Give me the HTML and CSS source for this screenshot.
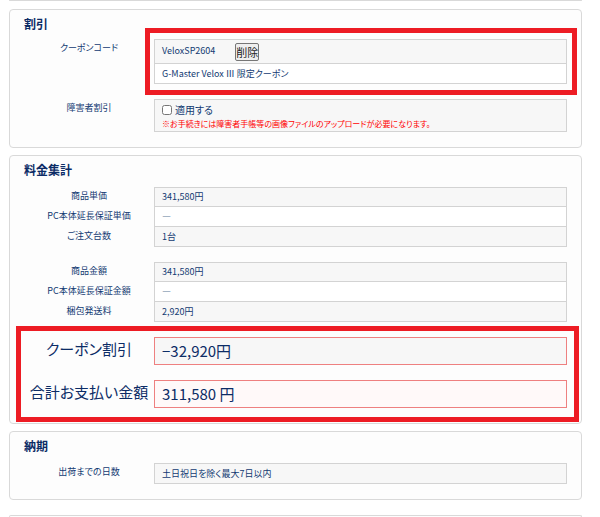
FILE: index.html
```
<!DOCTYPE html>
<html lang="ja">
<head>
  <meta charset="UTF-8" />
  <meta name="viewport" content="width=device-width, initial-scale=1.0"/>
  <title>お見積もり</title>
  <link rel="stylesheet" href="styles.css">
</head>
<body>

  <div class="card card-prev"></div>

  <section class="card discount">
    <h2>割引</h2>
    <table class="list marked marked-value">
      <tr class="coupon">
        <th rowspan="2" scope="rowgroup">クーポンコード</th>
        <td><span class="code">VeloxSP2604</span><button type="button">削除</button></td>
      </tr>
      <tr>
        <td>G-Master Velox Ⅲ 限定クーポン</td>
      </tr>
    </table>
    <table class="list">
      <tr>
        <th scope="row">障害者割引</th>
        <td class="apply">
          <label><input type="checkbox">適用する</label>
          <p class="note">※お手続きには障害者手帳等の画像ファイルのアップロードが必要になります。</p>
        </td>
      </tr>
    </table>
  </section>

  <section class="card">
    <h2>料金集計</h2>
    <table class="list price">
      <tr><th scope="row">商品単価</th><td>341,580円</td></tr>
      <tr><th scope="row">PC本体延長保証単価</th><td>―</td></tr>
      <tr><th scope="row">ご注文台数</th><td>1台</td></tr>
    </table>
    <table class="list price">
      <tr><th scope="row">商品金額</th><td>341,580円</td></tr>
      <tr><th scope="row">PC本体延長保証金額</th><td>―</td></tr>
      <tr><th scope="row">梱包発送料</th><td>2,920円</td></tr>
    </table>
    <div class="marked marked-row">
      <table class="list total">
        <tr><th scope="row">クーポン割引</th><td>−32,920円</td></tr>
      </table>
      <table class="list total total-pay">
        <tr><th scope="row">合計お支払い金額</th><td>311,580 円</td></tr>
      </table>
    </div>
  </section>

  <section class="card">
    <h2>納期</h2>
    <table class="list">
      <tr><th scope="row">出荷までの日数</th><td>土日祝日を除く最大7日以内</td></tr>
    </table>
  </section>

  <div class="card card-next"></div>

</body>
</html>
```
FILE: styles.css
```
:root {
  --navy: #123a72;
  --navy-dark: #0c2c66;
  --line: #d3d3d3;
  --card-line: #d9d9d9;
  --red-line: #ee8080;
  --mark: #ed1c24;
  --label-width: 130px;
}
* { box-sizing: border-box; margin: 0; padding: 0; }
html { overflow: hidden; }
body {
  font-family: "Noto Sans CJK JP", sans-serif;
  font-feature-settings: "palt";
  font-size: 9px;
  line-height: 18px;
  color: var(--navy);
  background: #fff;
  padding: 0 18px 0 9px;
}

.card {
  background: #fdfdfd;
  border: 1px solid var(--card-line);
  border-radius: 4px;
  padding: 5px 14px 15px;
  margin-bottom: 7px;
}
.card h2 {
  font-size: 12px;
  line-height: 18px;
  color: var(--navy-dark);
  margin-bottom: 8px;
}
.discount h2 {
  margin-bottom: 6px;
}
.card-prev {
  height: 1px;
  padding: 0;
  border-width: 0 0 1px;
  margin-bottom: 8px;
}
.card-next {
  height: 2px;
  padding: 0;
  border-bottom: 0;
  border-radius: 4px 4px 0 0;
  margin: 15px 0 0;
}

/* 項目リスト */
.list {
  position: relative;
  width: 100%;
  table-layout: fixed;
  border-collapse: separate;
  border-spacing: 0;
}
.list + .list {
  margin-top: 15px;
}
.list th {
  width: var(--label-width);
  font-weight: normal;
  text-align: center;
  vertical-align: top;
}
.list td {
  height: 21px;
  padding: 0 7px;
  background: #f7f7f7;
  border: 1px solid var(--line);
}
.list tr + tr td {
  height: 20px;
  border-top: 0;
}
.list tr:nth-child(even) td {
  background: #fff;
}

.list .coupon td {
  height: 25px;
}
.code {
  margin-right: 20px;
}
.list button {
  font-family: inherit;
  font-size: 11px;
  line-height: 16px;
  padding: 0;
  color: #222;
  background: #efefef;
  border: 1px solid #767676;
  border-radius: 2px;
  vertical-align: middle;
}

.list .apply {
  height: 33px;
}
.apply label {
  display: flex;
  align-items: center;
  gap: 3px;
  font-size: 10px;
  line-height: 18px;
}
.apply input {
  width: 10px;
  height: 10px;
}
.note {
  font-size: 8px;
  line-height: 9px;
  color: #f00;
  padding-bottom: 3px;
}

.list.price td {
  height: 20px;
}

.list.total th,
.list.total td {
  font-size: 15px;
  line-height: 24px;
  color: var(--navy-dark);
}
.list.total th {
  white-space: nowrap;
}
.list.total td {
  height: 28px;
  border-color: var(--red-line);
}
.list.total-pay td {
  background: #fff9f9;
}

/* 赤枠の強調 */
.marked {
  position: relative;
}
.marked-row {
  margin-top: 15px;
}
.marked::after {
  content: "";
  position: absolute;
  inset: -11px -10px;
  border: 5px solid var(--mark);
  pointer-events: none;
}
.marked-value::after {
  left: calc(var(--label-width) - 9px);
}
.marked-row::after {
  inset: -11px -12px -14px -8px;
}
```
